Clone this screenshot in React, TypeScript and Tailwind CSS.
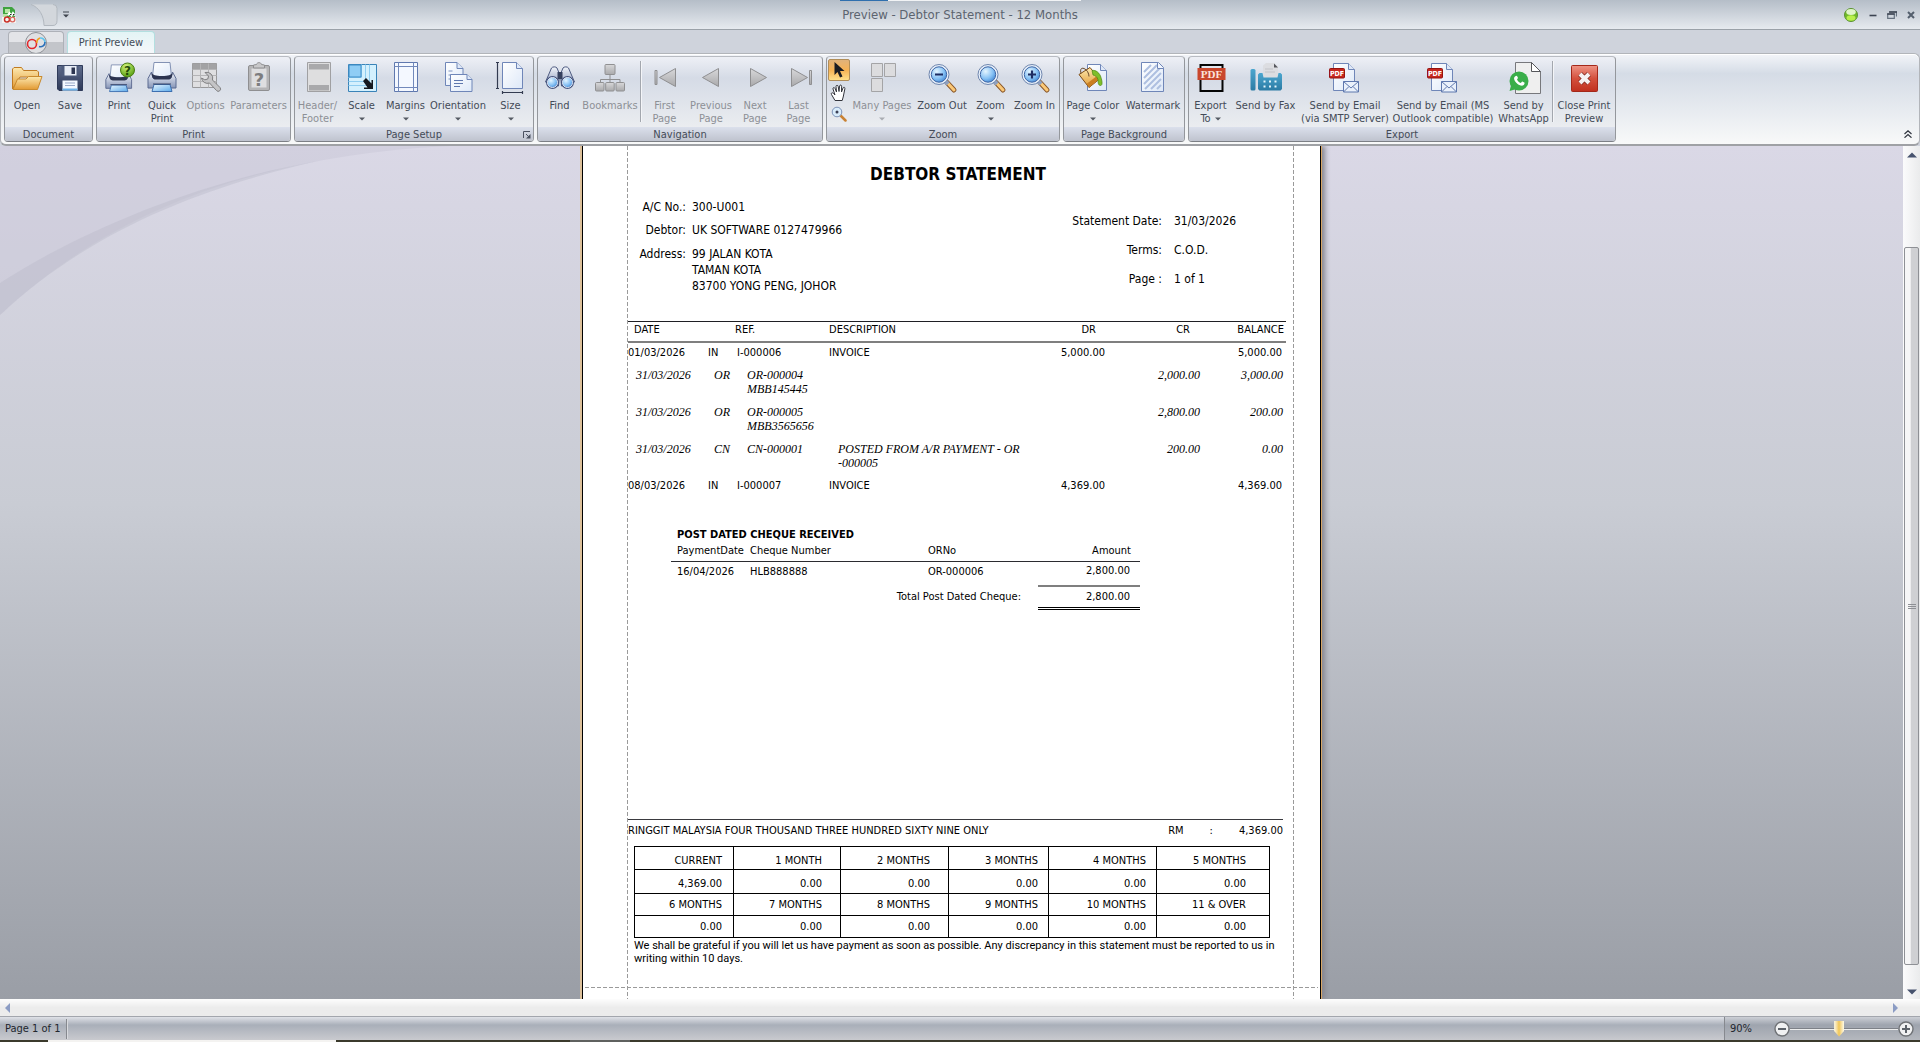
import type { ReactNode } from "react";

/* ---------- Ribbon icons (32x32 artboard) ---------- */

function Defs() {
  return (
    <svg className="absolute h-0 w-0" aria-hidden="true">
      <defs>
        <linearGradient id="gold" x1="0" y1="0" x2="0" y2="1">
          <stop offset="0" stopColor="#fde9b0" />
          <stop offset="1" stopColor="#e29a33" />
        </linearGradient>
        <linearGradient id="paper" x1="0" y1="0" x2="1" y2="1">
          <stop offset="0" stopColor="#ffffff" />
          <stop offset="1" stopColor="#dde8f8" />
        </linearGradient>
        <linearGradient id="gray" x1="0" y1="0" x2="0" y2="1">
          <stop offset="0" stopColor="#d8d8da" />
          <stop offset="1" stopColor="#a9a9ab" />
        </linearGradient>
        <linearGradient id="body" x1="0" y1="0" x2="0" y2="1">
          <stop offset="0" stopColor="#f2f5fb" />
          <stop offset="1" stopColor="#8796b8" />
        </linearGradient>
        <linearGradient id="navy" x1="0" y1="0" x2="0" y2="1">
          <stop offset="0" stopColor="#5f6c8d" />
          <stop offset="1" stopColor="#2c3857" />
        </linearGradient>
        <linearGradient id="sky" x1="0" y1="0" x2="1" y2="1">
          <stop offset="0" stopColor="#e9f6ff" />
          <stop offset="1" stopColor="#5aa9ea" />
        </linearGradient>
        <radialGradient id="lens" cx="0.35" cy="0.3" r="0.8">
          <stop offset="0" stopColor="#e4f5ff" />
          <stop offset="0.6" stopColor="#84c0f4" />
          <stop offset="1" stopColor="#3d82d0" />
        </radialGradient>
        <radialGradient id="green" cx="0.4" cy="0.25" r="0.8">
          <stop offset="0" stopColor="#d4f37b" />
          <stop offset="1" stopColor="#4e9a0c" />
        </radialGradient>
        <linearGradient id="red" x1="0" y1="0" x2="0" y2="1">
          <stop offset="0" stopColor="#ef9485" />
          <stop offset="0.5" stopColor="#d4503d" />
          <stop offset="1" stopColor="#c0301f" />
        </linearGradient>
        <linearGradient id="fax" x1="0" y1="0" x2="0" y2="1">
          <stop offset="0" stopColor="#4ba6cf" />
          <stop offset="1" stopColor="#2c7ba4" />
        </linearGradient>
      </defs>
    </svg>
  );
}

function Art({ children }: { children: ReactNode }) {
  return (
    <svg viewBox="0 0 32 32" className="h-8 w-8 shrink-0 overflow-visible" aria-hidden="true">
      {children}
    </svg>
  );
}

const OpenArt = () => (
  <Art>
    <path d="M1.500 28V8l1.500-1.500h7.500L12.500 9.500H26l1.500 1.500v5H9z" fill="url(#gold)" stroke="#c07a22" />
    <path d="M2 28.500L6.500 18H15l2.500-2.500H31L26.500 28.500z" fill="url(#gold)" stroke="#c98a2e" />
  </Art>
);
const SaveArt = () => (
  <Art>
    <path d="M3.500 4.500h25v25h-23.500l-1.500-1.500z" fill="url(#navy)" stroke="#2f3b5a" />
    <path d="M7.500 4.500h17v11h-17z" fill="#4e5c7d" />
    <path d="M10.500 5h12v9.500h-12z" fill="#e8edf6" />
    <path d="M17.500 6.500h3.500v6.500h-3.500z" fill="#2c3550" />
    <path d="M8.500 19.500h15v10h-15z" fill="#f4f8ff" />
    <path d="M8.500 27.500h15v2h-15z" fill="#6cb2ea" />
    <path d="M11 22h10M11 24.500h10" stroke="#9aa9c8" />
  </Art>
);
const Printer = () => (
  <>
    <path d="M8 1.500h16l1.500 14h-19z" fill="url(#paper)" stroke="#8392b4" />
    <path d="M2 17.500l3.500-6.500 1.500 6h18l1.500-6 3.500 6.500v9.500h-28z" fill="url(#body)" stroke="#5b6a90" />
    <path d="M5.500 12c.3 4 1.500 6.500 4 6.500h13c2.500 0 3.700-2.500 4-6.500-1.500 2-4 3-10.500 3s-9-1-10.500-3z" fill="#2c3450" />
    <path d="M8 23.500h16l2 7h-20z" fill="url(#sky)" stroke="#3d6fb0" />
    <path d="M7 23h18" stroke="#3b4767" />
  </>
);
const PrintArt = () => (
  <Art>
    <g transform="translate(1 2.500) scale(.92)"><Printer /></g>
    <circle cx="24.500" cy="9" r="7" fill="url(#green)" stroke="#4b7d14" />
    <text x="24.500" y="13.500" textAnchor="middle" fontSize="12" fontWeight="bold" fontFamily="DejaVu Sans" fill="#1f4a08">?</text>
  </Art>
);
const QuickArt = () => <Art><Printer /></Art>;
const OptionsArt = () => (
  <Art>
    <path d="M2.500 2.500h24v24h-24z" fill="#dfdfe1" stroke="#98989a" />
    <path d="M2.500 2.500h24v6h-24z" fill="#a2a2a4" />
    <path d="M10.500 2.500v24M18.500 2.500v24M2.500 8.500h24M2.500 14.500h24M2.500 20.500h24" stroke="#b4b4b6" fill="none" />
    <path d="M11.500 17a6 6 0 0 0 8 5l7 7.500a2.300 2.300 0 0 0 3.500-3l-7.500-7.500a6 6 0 0 0-7.500-7.500l3.500 3.500-.7 3-3 .8z" fill="#c4c4c6" stroke="#7f7f81" />
  </Art>
);
const ParametersArt = () => (
  <Art>
    <rect x="5.500" y="4.500" width="21" height="25" rx="1.500" fill="#b5b5b7" stroke="#8f8f91" />
    <path d="M8.500 7.500h15v19h-15z" fill="#dedee0" />
    <path d="M10.500 7v-3l3-.5c.5-2.500 4.500-2.500 5 0l3 .5v3z" fill="#c8c8ca" stroke="#8f8f91" />
    <text x="16" y="24.500" textAnchor="middle" fontSize="18" fontWeight="bold" fontFamily="DejaVu Sans" fill="#7d7d7f">?</text>
  </Art>
);
const HeaderArt = () => (
  <Art>
    <path d="M5.500 1.500h23v29h-23z" fill="#dededf" stroke="#a0a0a2" />
    <path d="M7 3h20v5.500h-20zM7 24h20v5.500h-20z" fill="#a9a9ab" />
  </Art>
);
const ScaleArt = () => (
  <Art>
    <path d="M2.500 3.500h28v27h-28z" fill="#d4f0fd" stroke="#3a83b8" />
    <path d="M2.500 16.500h13v-13M2.500 24.500h21v-21M2.500 20.500h17v-17" stroke="#90cdf0" fill="none" />
    <path d="M3 4h12v12h-12z" fill="#8fcdf5" stroke="#3d8cc6" />
    <path d="M17 20l3-3 5.500 5.500V19l1.500 0v9h-9v-1.500h3.500z" fill="#15181f" />
  </Art>
);
const MarginsArt = () => (
  <Art>
    <path d="M4.500 1.500h23v29h-23z" fill="#f4f8ff" stroke="#5f78ae" />
    <path d="M8.500 1.500v29M23.500 1.500v29M4.500 5.500h23M4.500 26.500h23" stroke="#7289bb" />
  </Art>
);
const OrientationArt = () => (
  <Art>
    <path d="M3.500 1.500h11.500l6 6v17h-17.500z" fill="url(#paper)" stroke="#6f86b8" />
    <path d="M15 1.500v6h6" fill="#dfe8f7" stroke="#6f86b8" />
    <path d="M6.500 10h4M6.500 14h3M6.500 18h3" stroke="#7e93c0" />
    <path d="M8.500 13.500h16.500l5 5v12h-21.500z" fill="url(#paper)" stroke="#6f86b8" />
    <path d="M25 13.500v5h5" fill="#dfe8f7" stroke="#6f86b8" />
    <path d="M12 19.500h9M12 22.500h9M12 25.500h6" stroke="#5f78ae" />
  </Art>
);
const SizeArt = () => (
  <Art>
    <path d="M7.500 1.500h14l6 6v20h-20z" fill="url(#paper)" stroke="#6f86b8" />
    <path d="M21.500 1.500v6h6" fill="#dfe8f7" stroke="#6f86b8" />
    <path d="M2.500 1.500v26M1 1.500h3M1 27.500h3M7.500 31.500h20M7.500 30v3M27.500 30v3" stroke="#333b50" strokeWidth="1.200" />
  </Art>
);
const FindArt = () => (
  <Art>
    <path d="M7.500 7c1-1.500 4.500-1.500 5.500 0l2.500 6-1 12-13-4z" fill="url(#body)" stroke="#4d5a80" />
    <path d="M24.500 7c-1-1.500-4.500-1.500-5.500 0l-2.500 6 1 12 13-4z" fill="url(#body)" stroke="#4d5a80" />
    <path d="M13.500 11h5v7h-5z" fill="#36415f" />
    <circle cx="8.500" cy="21.500" r="6.500" fill="#45547e" />
    <circle cx="23.500" cy="21.500" r="6.500" fill="#45547e" />
    <circle cx="8.500" cy="21.500" r="5" fill="url(#lens)" stroke="#dfe6f4" />
    <circle cx="23.500" cy="21.500" r="5" fill="url(#lens)" stroke="#dfe6f4" />
  </Art>
);
const BookmarksArt = () => (
  <Art>
    <path d="M16 14v8M6.500 21.500v-3h19.500v3" stroke="#8d8d8f" fill="none" />
    <rect x="11" y="3.500" width="10" height="10" rx="1" fill="url(#gray)" stroke="#909092" />
    <rect x="1.500" y="21.500" width="8.500" height="8.500" rx="1" fill="url(#gray)" stroke="#909092" />
    <rect x="11.700" y="21.500" width="8.500" height="8.500" rx="1" fill="url(#gray)" stroke="#909092" />
    <rect x="22" y="21.500" width="8.500" height="8.500" rx="1" fill="url(#gray)" stroke="#909092" />
  </Art>
);
const Triangle = ({ d }: { d: string }) => (
  <path d={d} fill="url(#gray)" stroke="#8f8f91" />
);
const FirstArt = () => <Art><Triangle d="M26.500 7.500v18l-16-9z" /><Triangle d="M6 9.500h2v14h-2z" /></Art>;
const PrevArt = () => <Art><Triangle d="M23.500 7.500v18l-16-9z" /></Art>;
const NextArt = () => <Art><Triangle d="M11.500 7.500v18l16-9z" /></Art>;
const LastArt = () => <Art><Triangle d="M8.500 7.500v18l16-9z" /><Triangle d="M26.500 9.500h2v14h-2z" /></Art>;
const ManyArt = () => (
  <Art>
    <path d="M5.500 2.500h11v13h-11zM18.500 2.500h11v13h-11zM5.500 17.500h11v13h-11z" fill="#dcdcde" stroke="#a4a4a6" />
  </Art>
);
function Lens({ children }: { children?: ReactNode }) {
  return (
    <Art>
      <path d="M21 21.500l7 7.500" stroke="#8c5a2c" strokeWidth="5" strokeLinecap="round" />
      <path d="M22.500 23l5.500 6" stroke="#fbc876" strokeWidth="3" strokeLinecap="round" />
      <path d="M19 20l3 3" stroke="#8fa0bf" strokeWidth="4.500" />
      <circle cx="13" cy="13.500" r="10" fill="#e8f0fa" stroke="#6f86ae" />
      <circle cx="13" cy="13.500" r="7.700" fill="url(#lens)" stroke="#3f66a6" />
      {children}
    </Art>
  );
}
const ZoomOutArt = () => <Lens><path d="M9 13.500h8" stroke="#1d2d63" strokeWidth="2.200" /></Lens>;
const ZoomArt = () => <Lens />;
const ZoomInArt = () => <Lens><path d="M9 13.500h8M13 9.500v8" stroke="#1d2d63" strokeWidth="2.200" /></Lens>;
const ColorArt = () => (
  <Art>
    <path d="M10.500 3.500h13l6 6v20h-19z" fill="url(#paper)" stroke="#6f86b8" />
    <path d="M23.500 3.500v6h6" fill="#dfe8f7" stroke="#6f86b8" />
    <path d="M2 13.500L13 6.500l9.500 11.500-10.500 8.500z" fill="url(#gold)" stroke="#7a4a16" />
    <path d="M9.500 23l11-8.500 2 3.500-10.500 8.500z" fill="#c97f22" />
    <path d="M4 12.500c-1-4 0-6 3-5s5 5 5 8" fill="none" stroke="#6b4a2b" />
    <path d="M15 9.500c4-1 8 3 9 7 1 3 2 8-.5 8s-2.500-3.500-2.500-6c-1-3-3-4-5-4.500z" fill="#7fbf2a" stroke="#4c8715" strokeWidth=".7" />
  </Art>
);
const WatermarkArt = () => (
  <Art>
    <path d="M4.500 1.500h17l5 5v24h-22z" fill="url(#paper)" stroke="#6f86b8" />
    <path d="M7 11l7-7M7 17l13-13M7 23l17-17M8 28L24 12M14 28L24 18M20 28l4-4" stroke="#aebfe0" strokeWidth="2" />
    <path d="M20.500 1.500v6h6" fill="#f2f6fd" stroke="#6f86b8" />
  </Art>
);
const PdfArt = () => (
  <Art>
    <path d="M5.500 4h22v26h-22z" fill="none" stroke="#050505" strokeWidth="2" />
    <path d="M2.500 7h28v12h-28z" fill="#c9472d" />
    <text x="16.500" y="17" textAnchor="middle" fontSize="11" fontWeight="bold" fontFamily="Liberation Serif" fill="#fbe3dc">PDF</text>
  </Art>
);
const FaxArt = () => (
  <Art>
    <path d="M13 4.500l3-2.500h8l4 4v12h-15z" fill="#dcdde1" />
    <path d="M24 2.500v4h4z" fill="#55565c" />
    <path d="M15 8h8M15 11h10" stroke="#c2c3c8" />
    <rect x=".5" y="8" width="5" height="21.500" rx="1.500" fill="url(#fax)" />
    <path d="M8 13.500l1.500-1.500h3l1 4.500h14l1-4.500h2l1.500 1.500v14.500l-1.500 1.500h-21l-1.500-1.500z" fill="url(#fax)" />
    <path d="M13.500 20.500h2M19 20.500h2M24.500 20.500h2M13.500 25.500h2M19 25.500h2M24.500 25.500h2" stroke="#e4f4fb" strokeWidth="2" />
  </Art>
);
const MailArt = () => (
  <Art>
    <path d="M4.500 2.500h15l6 6v21h-21z" fill="url(#paper)" stroke="#6f86b8" />
    <path d="M19.500 2.500v6h6" fill="#dfe8f7" stroke="#6f86b8" />
    <rect x=".5" y="7.500" width="15" height="9.500" rx="1" fill="#c5271f" stroke="#96130f" />
    <text x="8" y="15" textAnchor="middle" fontSize="7" fontWeight="bold" fontFamily="DejaVu Sans Condensed" fill="#fff">PDF</text>
    <path d="M14.500 20.500h15v10.500h-15z" fill="#eaf1fb" stroke="#5f78ae" />
    <path d="M14.500 20.500l7.500 6.500 7.500-6.500M14.500 31l5.500-5.500M29.500 31l-5.500-5.500" fill="none" stroke="#5f78ae" />
  </Art>
);
const WhatsAppArt = () => (
  <Art>
    <path d="M7.500 1.500h16l9 9v22h-25z" fill="#efefef" stroke="#77787c" />
    <path d="M23.500 1.500v9h9z" fill="#fff" stroke="#55565a" />
    <circle cx="11" cy="20" r="9.500" fill="#3aae49" />
    <path d="M1.500 30l2-7 5 5z" fill="#3aae49" />
    <path d="M7 15.500c1.500-1.500 2-1 3 1.500l-1 1.500c1 2 2 2.800 3.800 3.500l1.300-1.500c1 .3 2.500 1 2.500 1.500 0 2-2 3-4 2.500-3.500-1-6-4-6.500-6.500-.1-1 .2-2 .9-2.500z" fill="#fff" />
  </Art>
);
const CloseArt = () => (
  <Art>
    <rect x="3.500" y="4.500" width="26" height="26" rx="1" fill="url(#red)" stroke="#a3281a" />
    <path d="M12 13l9 9M21 13l-9 9" stroke="#7f2a22" strokeWidth="5.500" />
    <path d="M12 13l9 9M21 13l-9 9" stroke="#f6f1f2" strokeWidth="4" />
  </Art>
);

/* ---------- Ribbon ---------- */

const Arrow = ({ dim }: { dim?: boolean }) => (
  <svg viewBox="0 0 6 4" className={dim ? "inline h-1 w-1.5 text-[#a9acb2]" : "inline h-1 w-1.5 text-[#555a63]"} aria-hidden="true">
    <path d="M0 .5h6l-3 3z" fill="currentColor" />
  </svg>
);

function Tool({ art, label, second, width, disabled, menu }: {
  art: ReactNode; label: string; second?: string; width: string; disabled?: boolean; menu?: boolean;
}) {
  const tone = disabled ? "text-[#8d9096]" : "text-[#444b57]";
  return (
    <button type="button" disabled={disabled} className={`flex h-full flex-col items-center whitespace-nowrap pt-1 text-[11px] leading-[13px] ${width} ${tone}`}>
      {art}
      <span className="mt-1.5">{label}</span>
      <span className="flex h-[13px] items-center gap-1">
        {second}
        {menu && <Arrow dim={disabled} />}
      </span>
    </button>
  );
}

function Group({ title, width, launcher, children }: { title: string; width: string; launcher?: boolean; children: ReactNode }) {
  return (
    <section aria-label={title} className={`flex h-[86px] shrink-0 flex-col overflow-hidden rounded border border-t-[#b9bcc2] border-x-[#94979c] border-b-[#7c7f85] bg-linear-to-b from-[#eef0f6] from-0% via-[#d5dbe6] via-25% to-[#f1f2f3] ${width}`}>
      <div className="flex h-[70px] justify-center">{children}</div>
      <h2 className="relative h-[14px] bg-linear-to-b from-[#dbe0ec] to-[#bfc3ce] text-center text-[11px] leading-[15px] text-[#444b57]">
        {title}
        {launcher && (
          <button type="button" aria-label="Page setup dialog" className="absolute right-0.5 bottom-0.5">
            <svg viewBox="0 0 8 8" className="block h-2 w-2"><path d="M.5 7V.5H7M3 3l3 3" fill="none" stroke="#4b5160" /><path d="M7.500 3v4.500H3z" fill="#4b5160" /></svg>
          </button>
        )}
      </h2>
    </section>
  );
}

const Divider = () => <div className="mt-1 h-[61px] w-px bg-[#a3a7ae] shadow-[1px_0_0_#f4f5f8]" />;

function Ribbon() {
  return (
    <div className="flex h-[93px] shrink-0 gap-[3px] rounded-md border border-[#b2b5ba] border-b-2 border-b-[#9fa1a5] bg-linear-to-b from-[#f3f5f9] from-0% via-[#d5dce6] via-[22%] to-[#f8f9f9] px-[3px] py-0.5 shadow-[inset_0_1px_0_#fff]">
      <Group title="Document" width="w-[89px]">
        <Tool art={<OpenArt />} label="Open" width="w-[43px]" />
        <Tool art={<SaveArt />} label="Save" width="w-[43px]" />
      </Group>
      <Group title="Print" width="w-[195px]">
        <Tool art={<PrintArt />} label="Print" width="w-[43px]" />
        <Tool art={<QuickArt />} label="Quick" second="Print" width="w-[43px]" />
        <Tool art={<OptionsArt />} label="Options" width="w-[44px]" disabled />
        <Tool art={<ParametersArt />} label="Parameters" width="w-[62px]" disabled />
      </Group>
      <Group title="Page Setup" width="w-[240px]" launcher>
        <Tool art={<HeaderArt />} label="Header/" second="Footer" width="w-[45px]" disabled />
        <Tool art={<ScaleArt />} label="Scale" width="w-[43px]" menu />
        <Tool art={<MarginsArt />} label="Margins" width="w-[45px]" menu />
        <Tool art={<OrientationArt />} label="Orientation" width="w-[60px]" menu />
        <Tool art={<SizeArt />} label="Size" width="w-[45px]" menu />
      </Group>
      <Group title="Navigation" width="w-[286px]">
        <Tool art={<FindArt />} label="Find" width="w-[41px]" />
        <Tool art={<BookmarksArt />} label="Bookmarks" width="w-[60px]" disabled />
        <Divider />
        <Tool art={<FirstArt />} label="First" second="Page" width="w-[47px]" disabled />
        <Tool art={<PrevArt />} label="Previous" second="Page" width="w-[46px]" disabled />
        <Tool art={<NextArt />} label="Next" second="Page" width="w-[42px]" disabled />
        <Tool art={<LastArt />} label="Last" second="Page" width="w-[45px]" disabled />
      </Group>
      <Group title="Zoom" width="w-[234px]">
        <div className="flex w-[24px] flex-col items-center pt-0.5">
          <button type="button" aria-label="Pointer" className="flex h-[22px] w-[22px] items-center justify-center rounded-xs border border-[#b08d58] bg-linear-to-b from-[#e0b27a] via-[#f6b253] to-[#ffe08a]">
            <svg viewBox="0 0 12 16" className="h-4 w-3"><path d="M1.500 0v13l3-3 2.500 5.500 2.500-1-2.500-5.500h4.500z" fill="#1b1c22" /></svg>
          </button>
          <button type="button" aria-label="Hand Tool" className="flex h-[23px] w-[22px] items-center justify-center">
            <svg viewBox="0 0 18 18" className="h-[18px] w-[18px]">
              <path d="M5 16.500L1.500 10.500c-.8-1.500.8-2.300 1.800-1.200L5 11 3 5c-.4-1.600 1.400-2 2-.6l1.500 3.600L6 2.500c0-1.600 2-1.600 2.200 0l.8 5 .6-5.500c.2-1.400 2-1.200 2 .2l-.1 5.800 1.500-4c.6-1.300 2.200-.8 1.900.7l-1.700 8.300-1 3.500z" fill="#fff" stroke="#33353c" />
            </svg>
          </button>
          <button type="button" aria-label="Magnifier" className="flex h-[20px] w-[22px] items-center justify-center">
            <svg viewBox="0 0 16 16" className="h-4 w-4">
              <path d="M9.500 9.500l5 5" stroke="#c98234" strokeWidth="2.500" strokeLinecap="round" />
              <circle cx="6" cy="6" r="4.800" fill="#d9ecfb" stroke="#7d93b8" />
              <circle cx="6" cy="6" r="1.500" fill="#3a3f55" />
            </svg>
          </button>
        </div>
        <Tool art={<ManyArt />} label="Many Pages" width="w-[62px]" disabled menu />
        <Tool art={<ZoomOutArt />} label="Zoom Out" width="w-[58px]" />
        <Tool art={<ZoomArt />} label="Zoom" width="w-[39px]" menu />
        <Tool art={<ZoomInArt />} label="Zoom In" width="w-[49px]" />
      </Group>
      <Group title="Page Background" width="w-[122px]">
        <Tool art={<ColorArt />} label="Page Color" width="w-[58px]" menu />
        <Tool art={<WatermarkArt />} label="Watermark" width="w-[62px]" />
      </Group>
      <Group title="Export" width="w-[428px]">
        <Tool art={<PdfArt />} label="Export" second="To" width="w-[43px]" menu />
        <Tool art={<FaxArt />} label="Send by Fax" width="w-[67px]" />
        <Tool art={<MailArt />} label="Send by Email" second="(via SMTP Server)" width="w-[92px]" />
        <Tool art={<MailArt />} label="Send by Email (MS" second="Outlook compatible)" width="w-[104px]" />
        <Tool art={<WhatsAppArt />} label="Send by" second="WhatsApp" width="w-[57px]" />
        <Divider />
        <Tool art={<CloseArt />} label="Close Print" second="Preview" width="w-[62px]" />
      </Group>
      <button type="button" aria-label="Minimize the Ribbon" className="mr-1 mb-1 ml-auto self-end">
        <svg viewBox="0 0 8 8" className="h-2 w-2"><path d="M.5 4L4 .8 7.500 4M.5 7.700L4 4.500l3.500 3.200" fill="none" stroke="#30353f" strokeWidth="1.200" /></svg>
      </button>
    </div>
  );
}

/* ---------- Title bar and tabs ---------- */

function TitleBar() {
  return (
    <header className="relative flex h-[30px] shrink-0 items-center border-b border-[#9aa1a8] bg-linear-to-b from-[#b5bec8] to-[#e6eaef]">
      <div className="absolute inset-x-0 top-0 flex justify-center">
        <span className="h-px w-[48px] bg-[#2f6fae]" />
        <span className="h-px w-[193px] bg-[#f1f3f5]" />
      </div>
      <svg viewBox="0 0 14 16" className="ml-0.5 h-4 w-3.5" aria-hidden="true">
        <path d="M1 0h9l3 3v7H1z" fill="#3fa33f" />
        <path d="M3 2h5v4H3zM1 7h4v3H1z" fill="#b9e6a6" />
        <path d="M0 10h14v6H0z" fill="#f6f3f0" />
        <circle cx="5" cy="12.500" r="2.500" fill="none" stroke="#c82a22" strokeWidth="1.400" />
        <circle cx="10.500" cy="12.500" r="2.300" fill="none" stroke="#d9665e" strokeWidth="1.300" />
        <path d="M5.500 8.500l2-2.500 2 2.500L11 6l2 2.500" stroke="#fff" strokeWidth="2" fill="none" />
        <path d="M8 7.500h1.500M11 7.500h1.500" stroke="#222" fill="none" />
      </svg>
      <svg viewBox="0 0 28 22" className="ml-3.5 h-[22px] w-7" aria-hidden="true">
        <path d="M1 .5h22q4 0 4 4v12q0 5-4 5H14C14 12 9 3 1 .5z" fill="#d3d7dc" />
        <path d="M23 .5q4 0 4 4v12q0 5-4 5H14C14 12 9 3 1 .5" fill="none" stroke="#b2b8bf" />
      </svg>
      <button type="button" aria-label="Customize Quick Access Toolbar" className="ml-1">
        <svg viewBox="0 0 8 7" className="h-[7px] w-2"><path d="M1 1h6" stroke="#3f454e" /><path d="M1 3.500h6l-3 3z" fill="#3f454e" /></svg>
      </button>
      <h1 className="absolute inset-x-0 text-center text-[13px] leading-[30px] text-[#5c646f]">Preview - Debtor Statement - 12 Months</h1>
      <div className="z-10 ml-auto flex items-center gap-2.5 pr-[5px]">
        <svg viewBox="0 0 14 14" className="mr-px h-3.5 w-3.5" aria-hidden="true">
          <circle cx="7" cy="7" r="6.500" fill="#6fb929" stroke="#5b9132" />
          <ellipse cx="7" cy="10" rx="4.500" ry="2.800" fill="#b8f04b" />
          <ellipse cx="7" cy="4" rx="4.800" ry="3" fill="#dff5c8" />
        </svg>
        <button type="button" aria-label="Minimize"><svg viewBox="0 0 8 8" className="h-2 w-2"><path d="M.5 4.500h7" stroke="#3c4452" strokeWidth="1.600" /></svg></button>
        <button type="button" aria-label="Restore"><svg viewBox="0 0 10 8" className="h-2 w-2.5"><path d="M2.500 1h7v4.500M.7 3h6.600v4.300H.7z" fill="none" stroke="#66727f" strokeWidth="1.200" /><path d="M2 1h8M.2 3h7.500" stroke="#3c4452" strokeWidth="1.600" /></svg></button>
        <button type="button" aria-label="Close"><svg viewBox="0 0 8 8" className="h-2 w-2"><path d="M1 1l6 6M7 1L1 7" stroke="#545f6d" strokeWidth="2" /></svg></button>
      </div>
    </header>
  );
}

function Tabs() {
  return (
    <nav className="flex h-[23px] shrink-0 items-end gap-[3px] bg-[#cfd3dc] pt-px pl-2">
      <button type="button" aria-label="Application menu" className="flex h-[22px] w-[56px] justify-center rounded-t-sm border border-b-0 border-[#aeb1b8] bg-linear-to-b from-[#e3e4e8] from-50% to-[#c3c5ca] to-50%">
        <svg viewBox="0 0 24 22" className="h-[22px] w-6">
          <circle cx="12" cy="11" r="10.500" fill="#dfe0e3" stroke="#8d9096" />
          <circle cx="8" cy="12" r="4.500" fill="none" stroke="#e3262b" strokeWidth="1.600" />
          <path d="M13 11a4.500 4.500 0 0 1 3-5" fill="none" stroke="#f0a11d" strokeWidth="1.600" />
          <path d="M16 6a4.500 4.500 0 0 1 5 4.500" fill="none" stroke="#5ec4ee" strokeWidth="1.600" />
          <path d="M21 10a4.500 4.500 0 0 1-6 4.500" fill="none" stroke="#2b6fb8" strokeWidth="1.600" />
        </svg>
      </button>
      <button type="button" className="h-[22px] w-[88px] rounded-t-sm border border-b-0 border-[#b3dfe0] bg-linear-to-b from-[#e3f4f5] to-[#f5f7fa] text-[11px] leading-[22px] text-[#444b57]">Print Preview</button>
    </nav>
  );
}

/* ---------- Statement ---------- */

type Entry = { date: string; type: string; ref: string[]; desc: string[]; dr?: string; cr?: string; balance: string; payment?: boolean };

const entries: Entry[] = [
  { date: "01/03/2026", type: "IN", ref: ["I-000006"], desc: ["INVOICE"], dr: "5,000.00", balance: "5,000.00" },
  { date: "31/03/2026", type: "OR", ref: ["OR-000004", "MBB145445"], desc: [], cr: "2,000.00", balance: "3,000.00", payment: true },
  { date: "31/03/2026", type: "OR", ref: ["OR-000005", "MBB3565656"], desc: [], cr: "2,800.00", balance: "200.00", payment: true },
  { date: "31/03/2026", type: "CN", ref: ["CN-000001"], desc: ["POSTED FROM A/R PAYMENT - OR", "-000005"], cr: "200.00", balance: "0.00", payment: true },
  { date: "08/03/2026", type: "IN", ref: ["I-000007"], desc: ["INVOICE"], dr: "4,369.00", balance: "4,369.00" },
];

function Lines({ of }: { of: string[] }) {
  return <>{of.map((t) => <div key={t}>{t}</div>)}</>;
}

function Ledger() {
  return (
    <table className="w-full table-fixed border-collapse text-left text-[11px]">
      <colgroup>
        <col className="w-[80px]" /><col className="w-[27px]" /><col className="w-[94px]" /><col />
        <col className="w-[101px]" /><col className="w-[95px]" /><col className="w-[86px]" />
      </colgroup>
      <thead>
        <tr className="h-[20px] border-t border-b-2 border-t-[#1f1f24] border-b-[#7f7f7f] leading-[14px] *:pb-0.5 *:font-normal">
          <th className="pl-1.5" colSpan={2}>DATE</th>
          <th>REF.</th>
          <th>DESCRIPTION</th>
          <th className="pr-[9px] text-right">DR</th>
          <th className="pr-[10px] text-right">CR</th>
          <th className="pr-0.5 text-right">BALANCE</th>
        </tr>
      </thead>
      <tbody>
        {entries.map((e, i) =>
          e.payment ? (
            <tr key={i} className="h-[37px] whitespace-nowrap font-['Liberation_Serif',serif] text-[12px] leading-[14px] italic *:pt-1 *:align-top">
              <td className="pl-2">{e.date}</td>
              <td className="pl-1.5">{e.type}</td>
              <td className="pl-3"><Lines of={e.ref} /></td>
              <td className="pl-[9px]"><Lines of={e.desc} /></td>
              <td className="text-right">{e.dr}</td>
              <td className="text-right">{e.cr}</td>
              <td className="pr-[3px] text-right">{e.balance}</td>
            </tr>
          ) : (
            <tr key={i} className="h-[22px] leading-[14px]">
              <td>{e.date}</td>
              <td>{e.type}</td>
              <td className="pl-0.5">{e.ref[0]}</td>
              <td>{e.desc[0]}</td>
              <td className="text-right">{e.dr}</td>
              <td className="text-right">{e.cr}</td>
              <td className="pr-1 text-right">{e.balance}</td>
            </tr>
          ),
        )}
      </tbody>
    </table>
  );
}

function Cheques() {
  return (
    <section className="mt-[31px] ml-[43px] w-[469px] text-[11px] leading-[14px]">
      <h3 className="pl-1.5 font-bold">POST DATED CHEQUE RECEIVED</h3>
      <table className="w-full table-fixed border-collapse text-left">
        <colgroup><col className="w-[79px]" /><col className="w-[148px]" /><col className="w-[30px]" /><col className="w-[110px]" /><col className="w-[102px]" /></colgroup>
        <thead>
          <tr className="h-[20px] border-b border-[#2b2b30] align-top *:pt-0.5 *:font-normal">
            <th className="pl-1.5">PaymentDate</th>
            <th>Cheque Number</th>
            <th colSpan={2} className="pl-[30px]">ORNo</th>
            <th className="pr-[9px] text-right">Amount</th>
          </tr>
        </thead>
        <tbody>
          <tr className="h-[24px] *:pb-1">
            <td className="pl-1.5">16/04/2026</td>
            <td>HLB888888</td>
            <td colSpan={2} className="pl-[30px]">OR-000006</td>
            <td className="border-b-2 border-[#7f7f7f] pr-[10px] text-right">2,800.00</td>
          </tr>
        </tbody>
        <tfoot>
          <tr className="h-[23px]">
            <th colSpan={4} className="pr-[17px] text-right font-normal">Total Post Dated Cheque:</th>
            <td className="border-b-3 border-double border-black pr-[10px] text-right">2,800.00</td>
          </tr>
        </tfoot>
      </table>
    </section>
  );
}

const aging = [
  ["CURRENT", "1 MONTH", "2 MONTHS", "3 MONTHS", "4 MONTHS", "5 MONTHS"],
  ["4,369.00", "0.00", "0.00", "0.00", "0.00", "0.00"],
  ["6 MONTHS", "7 MONTHS", "8 MONTHS", "9 MONTHS", "10 MONTHS", "11 & OVER"],
  ["0.00", "0.00", "0.00", "0.00", "0.00", "0.00"],
];
const agingPad = ["pr-[11px]", "pr-[18px]", "pr-[18px]", "pr-[10px]", "pr-[10px]", "pr-[23px]"];
const agingRow = ["h-[23px] *:pt-1.5", "h-[24px] *:pt-1", "h-[22px]", "h-[22px]"];

function Statement() {
  return (
    <article className="relative flex w-[739px] shrink-0 flex-col border-x border-black bg-white pr-[34px] pl-[45px] text-black shadow-[-2px_0_0_#dcc09a,1px_0_0_#d9a766,4px_0_5px_#85858f] *:shrink-0">
      <div className="pointer-events-none absolute inset-y-0 left-[44px] w-px bg-[repeating-linear-gradient(to_bottom,#9a9a9a_0_4px,transparent_4px_6px)]" />
      <div className="pointer-events-none absolute inset-y-0 right-[26px] w-px bg-[repeating-linear-gradient(to_bottom,#9a9a9a_0_4px,transparent_4px_6px)]" />
      <div className="pointer-events-none absolute inset-x-0.5 top-[841px] h-px bg-[repeating-linear-gradient(to_right,#9a9a9a_0_4px,transparent_4px_6px)]" />
      <h2 className="mt-[17px] pl-0.5 text-center text-[17px] leading-[22px] font-bold">DEBTOR STATEMENT</h2>
      <div className="flex h-[136px] justify-between pr-[50px] text-[12px]">
        <dl className="mt-[14px] grid grid-cols-[58px_auto] content-start gap-x-[6px] leading-[16px]">
          <dt className="mb-[7px] text-right whitespace-nowrap">A/C No.:</dt><dd>300-U001</dd>
          <dt className="mb-2 text-right">Debtor:</dt><dd>UK SOFTWARE 0127479966</dd>
          <dt className="text-right">Address:</dt>
          <dd>99 JALAN KOTA<br />TAMAN KOTA<br />83700 YONG PENG, JOHOR</dd>
        </dl>
        <dl className="mt-[28px] grid grid-cols-[auto_62px] content-start gap-x-3 gap-y-[13px] leading-[16px]">
          <dt className="text-right">Statement Date:</dt><dd>31/03/2026</dd>
          <dt className="text-right">Terms:</dt><dd>C.O.D.</dd>
          <dt className="text-right">Page :</dt><dd>1 of 1</dd>
        </dl>
      </div>
      <Ledger />
      <Cheques />
      <div className="mt-[209px] mr-[3px] flex border-t border-[#3a3a3f] pt-1 text-[11px] leading-[14px]">
        <span>RINGGIT MALAYSIA FOUR THOUSAND THREE HUNDRED SIXTY NINE ONLY</span>
        <span className="ml-auto">RM</span>
        <span className="ml-[26px]">:</span>
        <span className="ml-[26px]">4,369.00</span>
      </div>
      <div className="mt-2 ml-1.5">
        <table className="w-[636px] table-fixed border-collapse border border-black text-right text-[11px] leading-[14px]">
          <colgroup><col className="w-[99px]" /><col className="w-[107px]" /><col className="w-[108px]" /><col className="w-[100px]" /><col className="w-[108px]" /><col /></colgroup>
          <tbody>
            {aging.map((row, r) => (
              <tr key={r} className={agingRow[r]}>
                {row.map((cell, c) =>
                  r % 2 === 0 ? (
                    <th key={c} scope="col" className={`border border-black font-normal whitespace-nowrap ${agingPad[c]}`}>{cell}</th>
                  ) : (
                    <td key={c} className={`border border-black ${agingPad[c]}`}>{cell}</td>
                  ),
                )}
              </tr>
            ))}
          </tbody>
        </table>
      </div>
      <p className="mt-px pl-1.5 font-['Roboto',sans-serif] text-[11px] leading-[13px]">
        We shall be grateful if you will let us have payment as soon as possible. Any discrepancy in this statement must be reported to us in writing within 10 days.
      </p>
    </article>
  );
}

/* ---------- Workspace and status bar ---------- */

function Workspace() {
  return (
    <main className="flex min-h-0 flex-1 flex-col">
      <div className="flex min-h-0 flex-1">
        <div className="relative flex min-w-0 flex-1 justify-center overflow-hidden bg-linear-to-b from-[#dad8e6] via-[#c9ccd4] via-42% to-[#9a9ea6]">
          <svg viewBox="0 0 460 170" className="absolute top-0 left-0 h-[170px] w-[460px]" aria-hidden="true">
            <path d="M0 0H450C240 10 100 75 0 169z" fill="#c9c8d8" opacity=".5" />
            <path d="M0 137C80 85 200 35 318 15 200 42 90 85 0 169z" fill="#b9bac8" opacity=".4" />
          </svg>
          <Statement />
        </div>
        <div className="flex w-[17px] shrink-0 flex-col items-center bg-linear-to-r from-[#fbfbfc] to-[#eaebec] pb-1">
          <button type="button" aria-label="Scroll up" className="flex h-[17px] items-center"><svg viewBox="0 0 10 6" className="h-1.5 w-2.5"><path d="M0 5.500h10L5 .5z" fill="#47536e" /></svg></button>
          <div className="h-[84px]" />
          <div className="flex w-[15px] flex-1 flex-col items-center justify-center gap-px rounded-xs border border-[#8e9095] bg-linear-to-r from-[#f6f6f7] from-40% to-[#cfd0d3] to-50%">
            <span className="h-px w-2 bg-[#8e9095]" /><span className="h-px w-2 bg-[#8e9095]" /><span className="h-px w-2 bg-[#8e9095]" />
          </div>
          <div className="h-[16px]" />
          <button type="button" aria-label="Scroll down" className="flex h-[14px] items-end"><svg viewBox="0 0 10 6" className="h-1.5 w-2.5"><path d="M0 .5h10L5 5.500z" fill="#47536e" /></svg></button>
        </div>
      </div>
      <div className="flex h-[17px] shrink-0 items-center justify-between bg-linear-to-b from-[#fdfdfd] to-[#ececec] to-50% pr-[22px] pl-[5px]">
        <button type="button" aria-label="Scroll left"><svg viewBox="0 0 5 10" className="block h-2.5 w-[5px]"><path d="M5 0v10L0 5z" fill="#8b9cc4" /></svg></button>
        <button type="button" aria-label="Scroll right"><svg viewBox="0 0 5 10" className="block h-2.5 w-[5px]"><path d="M0 0v10l5-5z" fill="#8b9cc4" /></svg></button>
      </div>
    </main>
  );
}

function RoundButton({ label, d }: { label: string; d: string }) {
  return (
    <button type="button" aria-label={label}>
      <svg viewBox="0 0 16 16" className="block h-4 w-4">
        <circle cx="8" cy="8" r="7" fill="#f0f1f2" stroke="#6f7276" strokeWidth="1.400" />
        <path d={d} stroke="#5d636a" strokeWidth="2" />
      </svg>
    </button>
  );
}

function StatusBar() {
  return (
    <footer className="flex h-[24px] shrink-0 items-center border-t border-[#a3a6ad] bg-linear-to-b from-[#e0e2e8] via-[#a9afb9] via-35% to-[#c9cacf] text-[11px] text-[#22262e]">
      <span className="pt-px pl-[5px]">Page 1 of 1</span>
      <span className="ml-1.5 h-5 w-px bg-[#86898f] shadow-[1px_0_0_#d8dade]" />
      <div className="ml-auto flex h-full w-[196px] items-center border-l border-[#86898f] bg-linear-to-b from-[#cdd0d6] via-[#9ea4ae] via-35% to-[#b5b8be] pr-1.5 pl-[5px]">
        <label htmlFor="zoom" className="w-[44px] pt-px">90%</label>
        <RoundButton label="Zoom out" d="M4 8h8" />
        <input
          id="zoom"
          type="range"
          min={0}
          max={100}
          defaultValue={45}
          className="h-4 min-w-0 flex-1 appearance-none bg-transparent bg-[linear-gradient(#7d8188,#7d8188),linear-gradient(#eceded,#eceded)] bg-[length:100%_1px,100%_1px] bg-[position:0_7px,0_8px] bg-no-repeat [&::-webkit-slider-thumb]:h-4 [&::-webkit-slider-thumb]:w-2.5 [&::-webkit-slider-thumb]:appearance-none [&::-webkit-slider-thumb]:bg-linear-to-r [&::-webkit-slider-thumb]:from-[#fffbe6] [&::-webkit-slider-thumb]:via-[#f0c552] [&::-webkit-slider-thumb]:to-[#fffbe6] [&::-webkit-slider-thumb]:[clip-path:polygon(0_0,100%_0,100%_65%,50%_100%,0_65%)]"
        />
        <RoundButton label="Zoom in" d="M4 8h8M8 4v8" />
      </div>
    </footer>
  );
}

export default function App() {
  return (
    <div className="relative flex h-screen flex-col overflow-hidden bg-[#cfd3dc] font-['DejaVu_Sans_Condensed','DejaVu_Sans',sans-serif]">
      <Defs />
      <TitleBar />
      <Tabs />
      <Ribbon />
      <Workspace />
      <StatusBar />
      <div className="flex h-0.5 shrink-0 bg-[#3b3a2c]">
        <span className="ml-[48px] w-[288px] bg-[#f4f3f1]" />
        <span className="w-[234px]" />
        <span className="w-[60px] bg-[#5f615f]" />
      </div>
    </div>
  );
}
